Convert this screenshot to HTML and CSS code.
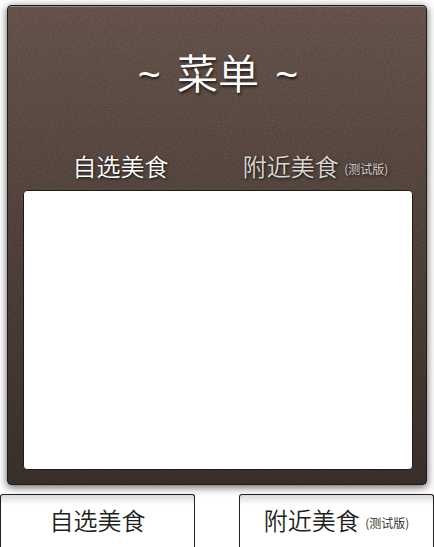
FILE: index.html
```
<!DOCTYPE html>
<html lang="zh-CN">
<head>
<meta charset="utf-8">
<title>菜单</title>
<link rel="stylesheet" href="styles.css">
</head>
<body>
<main class="menu">
  <svg class="grain" aria-hidden="true">
    <filter id="noise" x="0" y="0" width="100%" height="100%">
      <feTurbulence type="fractalNoise" baseFrequency="0.6" numOctaves="2" stitchTiles="stitch"/>
      <feColorMatrix values="0 0 0 0 0  0 0 0 0 0  0 0 0 0 0  0.6 0 0 0 -0.2"/>
    </filter>
    <rect width="100%" height="100%" filter="url(#noise)"/>
  </svg>
  <h1 class="title"><span class="wave">~</span><span>菜单</span><span class="wave">~</span></h1>
  <nav class="tabs">
    <a class="tab active" href="#own">自选美食</a>
    <a class="tab" href="#near">附近美食 <small>(测试版)</small></a>
  </nav>
  <section class="content"></section>
</main>
<nav class="cards">
  <a class="card" href="#own">自选美食</a>
  <a class="card" href="#near">附近美食 <small>(测试版)</small></a>
</nav>
</body>
</html>
```
FILE: styles.css
```
* { box-sizing: border-box; }

body {
  margin: 0;
  padding-top: 5px;
  overflow: hidden;
  background: #fff;
  color: #231f20;
  font-family: "Noto Sans CJK SC", sans-serif;
  font-weight: 350;
}

a { color: inherit; text-decoration: none; }

small {
  font-size: 12px;
  line-height: 1;
  vertical-align: middle;
}

.menu {
  position: relative;
  margin: 0 7px;
  padding: 37px 13px 14px 15px;
  border: 1px solid #1d1a18;
  border-radius: 4px;
  background: linear-gradient(#6a574e, #5a4a42 35%, #3c312c);
  box-shadow: 0 2px 8px rgba(0, 0, 0, 0.65), inset 0 1px 0 rgba(255, 255, 255, 0.3);
}

.grain {
  position: absolute;
  inset: 1px 0 0;
  width: 100%;
  height: 100%;
  opacity: 0.5;
}

.title {
  position: relative;
  display: flex;
  justify-content: center;
  gap: 16px;
  margin: 0;
  color: #fff;
  font-family: "Open Sans", "Noto Sans CJK SC", sans-serif;
  font-size: 41px;
  font-weight: 350;
  line-height: 60px;
  text-shadow: 1px 2px 3px rgba(0, 0, 0, 0.7);
}

.wave { font-weight: 500; }

.tabs {
  position: relative;
  display: flex;
  margin-top: 41px;
  color: #fff;
  text-shadow: 1px 1px 3px rgba(0, 0, 0, 0.8);
}

.tab {
  flex: 1;
  font-size: 24px;
  line-height: 44px;
  text-align: center;
  white-space: nowrap;
}

.tab:not(.active) { color: #dad5d2; }

.content {
  position: relative;
  height: 280px;
  margin-top: 2px;
  border: 1px solid #1d1a18;
  border-radius: 4px;
  background: #fff;
}

.cards {
  display: flex;
  gap: 44px;
  margin-top: 9px;
  position: relative;
}

.card {
  flex: 1;
  padding: 4px 0 16px;
  border: 1px solid #231f20;
  border-bottom: 0;
  border-radius: 3px 3px 0 0;
  background: linear-gradient(#dcdad8, #fff 10px);
  font-size: 24px;
  line-height: 42px;
  text-align: center;
  white-space: nowrap;
}
```
